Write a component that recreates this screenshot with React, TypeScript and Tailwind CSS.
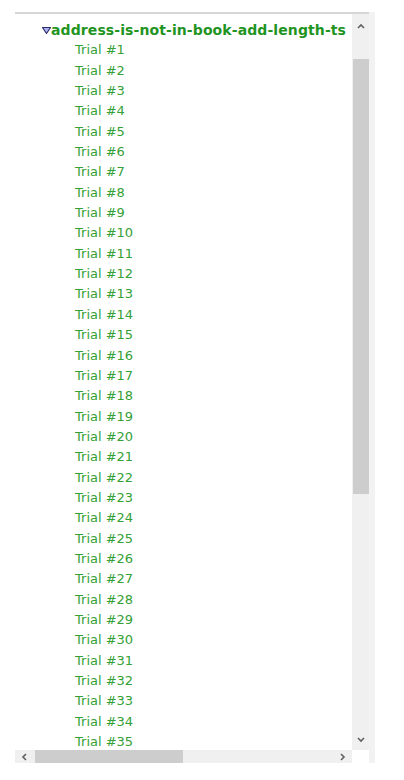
const trials = Array.from({ length: 35 }, (_, i) => i + 1);

function Chevron({ dir }: { dir: "up" | "down" | "left" | "right" }) {
  const d = {
    up: "M1 5 L4 2 L7 5",
    down: "M1 2 L4 5 L7 2",
    left: "M5 1 L2 4 L5 7",
    right: "M3 1 L6 4 L3 7",
  }[dir];
  return (
    <svg width="8" height="8" viewBox="0 0 8 8">
      <path d={d} fill="none" stroke="#606060" strokeWidth="1.6" />
    </svg>
  );
}

export default function App() {
  return (
    <div
      className="w-[404px] h-[780px] bg-white pt-[12px] pl-[15px] overflow-hidden"
      style={{ fontFamily: '"DejaVu Sans", Verdana, sans-serif' }}
    >
      <div className="flex h-[751px] w-[360px]">
        <div className="flex flex-col w-[354px]">
          <div className="h-[2px] bg-[#d6d6d6]" />
          <div className="flex h-[736px]">
            <div className="w-[331px] overflow-hidden pt-[6px]">
              <div className="flex items-center h-[20.35px] whitespace-nowrap">
                <svg width="9" height="7" viewBox="0 0 9 7" className="ml-[27px] shrink-0">
                  <path d="M0.5 0.5 L8.5 0.5 L4.5 6.5 Z" fill="#aeb0f2" stroke="#2c2c66" strokeWidth="1.1" />
                </svg>
                <span className="text-[14px] font-bold text-[#1f941f] leading-[20.35px] tracking-[0.1px]">
                  address-is-not-in-book-add-length-tst
                </span>
              </div>
              {trials.map((n) => (
                <div
                  key={n}
                  className="h-[20.35px] leading-[20.35px] pl-[60px] text-[13px] text-[#35a035] whitespace-nowrap"
                >
                  Trial #{n}
                </div>
              ))}
            </div>
            <div className="w-[6px] bg-white" />
            <div className="w-[17px] bg-[#f0f0f0] flex flex-col items-center">
              <div className="h-[20px] flex items-center justify-center pt-[5px]">
                <Chevron dir="up" />
              </div>
              <div className="h-[25px]" />
              <div className="h-[435px] w-[16px] bg-[#cdcdcd]" />
              <div className="flex-1" />
              <div className="h-[20px] flex items-center justify-center">
                <Chevron dir="down" />
              </div>
            </div>
          </div>
          <div className="flex h-[13px]">
            <div className="w-[337px] bg-[#f0f0f0] flex items-center">
              <div className="w-[20px] flex items-center justify-center">
                <Chevron dir="left" />
              </div>
              <div className="w-[148px] h-[13px] bg-[#cdcdcd]" />
              <div className="flex-1" />
              <div className="w-[20px] flex items-center justify-center">
                <Chevron dir="right" />
              </div>
            </div>
            <div className="w-[17px] bg-white" />
          </div>
        </div>
        <div className="w-[6px] bg-[#f2f2f2]" />
      </div>
    </div>
  );
}
